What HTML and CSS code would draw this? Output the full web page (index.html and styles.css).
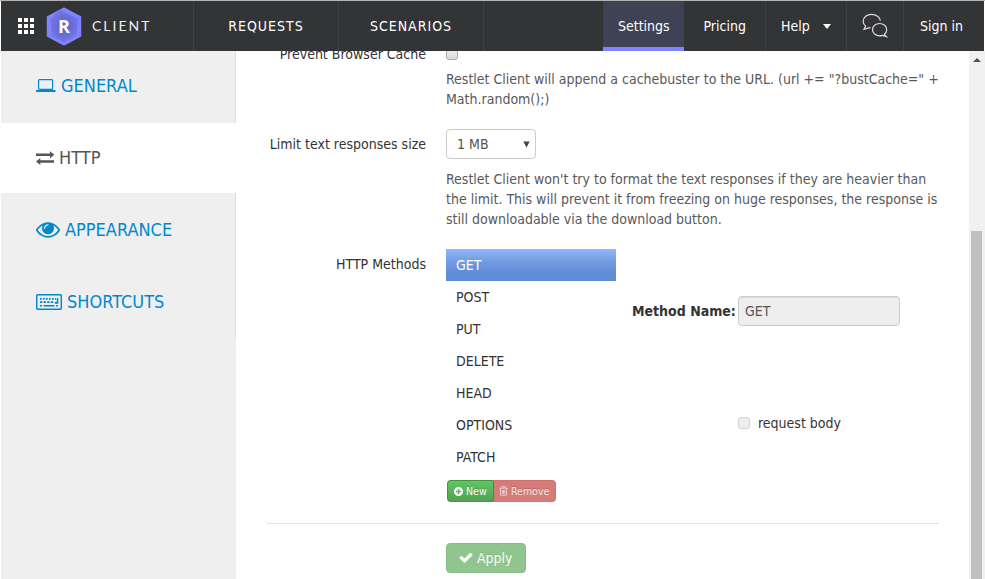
FILE: index.html
```html
<!DOCTYPE html>
<html lang="en">
<head>
<meta charset="utf-8">
<title>Restlet Client - Settings</title>
<link rel="stylesheet" href="styles.css">
</head>
<body>
<header class="topbar">
  <div class="brand">
    <svg class="apps" width="17" height="17" viewBox="0 0 17 17" fill="#fff"><path d="M0 0h4v4H0zM6 0h4v4H6zM12 0h4v4h-4zM0 6h4v4H0zM6 6h4v4H6zM12 6h4v4h-4zM0 12h4v4H0zM6 12h4v4H6zM12 12h4v4h-4z"/></svg>
    <div class="logo">
      <svg width="36" height="39" viewBox="0 0 36 39">
        <defs><radialGradient id="facet"><stop offset="0" stop-color="#5f63c4"/><stop offset=".55" stop-color="#686cd8"/><stop offset="1" stop-color="#7478ec"/></radialGradient></defs>
        <path d="M18 1.200 34.500 10v19L18 37.800 1.500 29V10z" fill="#8085ff" stroke="#8085ff" stroke-width="1.500" stroke-linejoin="round"/><path d="M14 3 32.500 11.500 30.500 28.500 18.500 35.500 6 29.500 4 12z" fill="url(#facet)"/></svg>
      <span>R</span>
    </div>
    <span class="brand-name">CLIENT</span>
  </div>
  <nav class="main-nav"><a>REQUESTS</a><a>SCENARIOS</a></nav>
  <nav class="side-nav">
    <a class="settings">Settings</a><a class="pricing">Pricing</a><a class="help">Help<i class="caret"></i></a>
    <a class="chat"><svg width="26" height="26" viewBox="0 0 26 26" fill="none" stroke="#dcdcdc" stroke-width="1.200"><path d="M8.500 14.600 6 15.200l-4 1.200 1.600-3.300C1.900 11.800 1.200 10.300 1.200 8.200 1.200 4.400 5 1.300 9.600 1.300S18 4.200 18.300 7.700"/><path d="M22.300 21.400c1.500-1.200 2.400-2.900 2.400-4.700 0-3.400-3.200-6.200-7.100-6.200s-7.100 2.800-7.100 6.200 3.200 6.200 7.100 6.200c1 0 2-.2 2.900-.5l3.900 1.200z"/></svg></a>
    <a class="signin">Sign in</a>
  </nav>
</header>
<div class="shell">
  <aside class="sidebar">
    <a><svg class="laptop" width="20" height="16" viewBox="0 0 20 16" fill="none" stroke="#08c" stroke-width="1.200"><rect x="2.600" y="1.600" width="14" height="9.800" rx="1"/><path d="M0 13h19.500" stroke-width="2"/></svg>GENERAL</a>
    <a class="active"><svg width="19" height="16" viewBox="0 0 19 16" fill="#555"><path d="M0 3.500h14V1.200l4.300 3.500L14 8.200V6H0zM18 10.200H4.300V8L0 11.500 4.300 15v-2.300H18z"/></svg>HTTP</a>
    <a><svg class="eye" width="24" height="16" viewBox="0 362 1792 1195" fill="#08c"><path d="M1664 960q-152-236-381-353 61 104 61 225 0 185-131.5 316.5t-316.5 131.5-316.5-131.5-131.5-316.5q0-121 61-225-229 117-381 353 133 205 333.5 326.5t434.5 121.5 434.5-121.5 333.5-326.5zm-720-384q0-20-14-34t-34-14q-125 0-214.5 89.5t-89.5 214.5q0 20 14 34t34 14 34-14 14-34q0-86 61-147t147-61q20 0 34-14t14-34zm848 384q0 34-20 69-140 230-376.5 368.5t-499.5 138.5-499.5-139-376.5-368q-20-35-20-69t20-69q140-229 376.5-368t499.5-139 499.5 139 376.5 368q20 35 20 69z"/></svg>APPEARANCE</a>
    <a><svg class="keys" width="26" height="16" viewBox="0 0 26 16" fill="none" stroke="#08c"><rect x=".7" y=".7" width="24.600" height="14.600" rx="1.300" stroke-width="1.500"/><path d="M4 4.800h16" stroke-width="1.700" stroke-dasharray="1.700 1.300"/><path d="M4 8.200h14" stroke-width="1.700" stroke-dasharray="2.400 1.200"/><path d="M21.500 4v4.900h-2.700M4 11.800h2M7.500 11.800h11M20 11.800h2" stroke-width="1.600"/></svg>SHORTCUTS</a>
  </aside>
  <main class="content">
    <div class="row cache"><label>Prevent Browser Cache</label><div class="field"><span class="check"></span><p>Restlet Client will append a cachebuster to the URL. (url += "?bustCache=" + Math.random();)</p></div></div>
    <div class="row limit"><label>Limit text responses size</label><div class="field"><div class="select">1 MB<svg width="7" height="7" viewBox="0 0 7 7"><path d="M.3.500h6.400L3.500 6.500z" fill="#444"/></svg></div><p>Restlet Client won't try to format the text responses if they are heavier than the limit. This will prevent it from freezing on huge responses, the response is still downloadable via the download button.</p></div></div>
    <div class="row methods"><label>HTTP Methods</label>
      <div class="field">
        <div class="editor">
          <ul><li class="selected">GET</li><li>POST</li><li>PUT</li><li>DELETE</li><li>HEAD</li><li>OPTIONS</li><li>PATCH</li></ul>
          <div class="details">
            <div class="name"><b>Method Name:</b><div class="input">GET</div></div>
            <div class="body"><span class="check disabled"></span>request body</div>
          </div>
        </div>
        <div class="group">
          <span class="btn new"><svg width="9" height="9" viewBox="128 128 1536 1536" fill="#fff"><path d="M1344 960v-128q0-26-19-45t-45-19h-256v-256q0-26-19-45t-45-19h-128q-26 0-45 19t-19 45v256h-256q-26 0-45 19t-19 45v128q0 26 19 45t45 19h256v256q0 26 19 45t45 19h128q26 0 45-19t19-45v-256h256q26 0 45-19t19-45zm320-64q0 209-103 385.500t-279.500 279.500-385.500 103-385.500-103-279.500-279.500-103-385.500 103-385.500 279.500-279.500 385.500-103 385.500 103 279.500 279.500 103 385.500z"/></svg>New</span><span class="btn remove"><svg width="9" height="10" viewBox="0 0 9 10" fill="none" stroke="#f6dedd"><path d="M.2 2.200h8.600M1.500 2.200v7h6v-7M3 2V.6h3V2M3.300 4v3.700M4.500 4v3.700M5.700 4v3.700" stroke-width=".8"/></svg>Remove</span>
        </div>
      </div>
    </div>
    <hr>
    <span class="btn apply"><svg width="14" height="14" viewBox="60 110 1672 1672" fill="#fff"><path d="M1671 566q0 40-28 68l-724 724-136 136q-28 28-68 28t-68-28l-136-136-362-362q-28-28-28-68t28-68l136-136q28-28 68-28t68 28l294 295 656-657q28-28 68-28t68 28l136 136q28 28 28 68z"/></svg>Apply</span>
  </main>
  <div class="scrollbar"><i class="up"></i><div class="thumb"></div></div>
</div>
</body>
</html>
```
FILE: styles.css
```css
* { box-sizing: border-box; }
body {
  margin: 0;
  height: 579px;
  padding-left: 1px;
  overflow: hidden;
  border-top: 1px solid #b4b4b4;
  background: #fff;
  color: #333;
  font: 14px/20px "DejaVu Sans Condensed", "DejaVu Sans", sans-serif;
  font-stretch: condensed;
}
.topbar { display: flex; height: 50px; width: 983px; background: #333436; color: #fff; }
.brand { display: flex; align-items: center; width: 192px; padding-left: 17px; }
.logo { position: relative; width: 36px; height: 39px; margin: 0 10px 0 11px; }
.logo svg { display: block; }
.logo span { position: absolute; inset: 0; text-align: center; font: bold 18px/39px "Open Sans", sans-serif; }
.brand-name { color: #eee; font-family: Lato, sans-serif; letter-spacing: 2px; }
.main-nav { display: flex; }
.main-nav a { width: 145px; line-height: 50px; border-left: 1px solid #3e4045; text-align: center; letter-spacing: 1px; }
.main-nav a:last-child { width: 146px; border-right: 1px solid #3e4045; }
.side-nav { display: flex; margin-left: auto; line-height: 50px; }
.side-nav a { border-left: 1px solid #3e4045; padding-left: 15px; }
.side-nav .settings { width: 81px; padding-left: 15px; border-left: 0; background: #3e4254; box-shadow: inset 0 -4px #8085ff; }
.side-nav .pricing { width: 81px; padding-left: 19.500px; border: 0; }
.side-nav .help { width: 81px; }
.side-nav .chat { width: 57px; padding: 12px 0 0 15px; line-height: 0; }
.side-nav .signin { width: 81px; padding-left: 16px; }
.caret { display: inline-block; margin-left: 13px; vertical-align: 2px; border: 4.500px solid transparent; border-width: 5px 4.500px 0; border-top-color: #fff; }

.shell { display: flex; height: 528px; }
.sidebar { width: 235px; background: #efefef; }
.sidebar a { display: flex; align-items: center; height: 72px; padding: 0 0 2px 35px; border-right: 1px solid #ddd; color: #08c; font-size: 18px; }
.sidebar svg { margin-right: 4px; flex: none; }
.sidebar .eye, .sidebar .laptop, .sidebar .keys { margin-right: 5px; }
.sidebar .active { padding-bottom: 0; height: 70px; background: #fff; border-color: #fff; color: #555; }
.sidebar .active + a, .sidebar .active + a + a { height: 73px; padding-bottom: 0; }
.sidebar .active + a + a { padding-bottom: 2px; }
.content { flex: 1; padding-left: 31px; }
.row { display: flex; }
.row label { width: 159px; margin-right: 20px; text-align: right; }
.field { width: 493px; }
.field p { margin: 10px 0 0; color: #595959; }
.cache { margin-top: -7px; height: 85px; clip-path: inset(7px 0 0); }
.cache .check { margin-top: 3px; }
.cache p { margin-top: 9px; }
.check { display: block; width: 12px; height: 13px; border: 1px solid #aaa; border-radius: 3px; background: linear-gradient(#eee, #dcdcdc); }
.limit label, .methods label { padding-top: 5px; }
.select { display: flex; align-items: center; justify-content: space-between; width: 90px; height: 30px; padding: 0 5px 0 10px; border: 1px solid #ccc; border-radius: 4px; color: #555; }
.methods { margin-top: 20px; }
.editor { display: flex; height: 224px; }
ul { width: 170px; margin: 0; padding: 0; list-style: none; }
li { height: 32px; padding-left: 10px; line-height: 32px; }
.selected { color: #fff; background: linear-gradient(#92b7fb 0%, #759ee4 35%, #608bd6 75%, #628bd3); }
.details { padding: 47px 0 0 16px; }
.name { display: flex; align-items: center; }
.name b { width: 106px; }
.input { width: 162px; height: 30px; padding: 0 6px; line-height: 28px; color: #555; background: #eee; border: 1px solid #ccc; border-radius: 4px; box-shadow: inset 0 1px 1px rgba(0,0,0,.075); }
.body { display: flex; align-items: center; margin: 87px 0 0 106px; }
.body .check { height: 12px; margin-right: 8px; }
.check.disabled { border-color: #d4d4d4; background: #eee; }
.group { display: flex; margin: 7px 0 0 1px; }
.btn { display: flex; align-items: center; color: #fff; text-shadow: 0 -1px rgba(0,0,0,.2); }
.group .btn { height: 22px; padding-left: 6px; border: 1px solid #43943f; font-size: 10.5px; }
.group .new { width: 47px; border-radius: 4px 0 0 4px; background: linear-gradient(#62c462, #51a351); border-right-color: #498d42; }
.group .remove { width: 62px; padding-left: 5px; border: 1px solid #cf7474; border-left: 0; border-radius: 0 4px 4px 0; background: #d67c78; color: #f9e8e7; }
.group svg { margin-right: 3px; }
hr { width: 672px; height: 1px; margin: 21px 0 19px; border: 0; background: #e2e2e2; }
.apply { width: 80px; height: 30px; margin-left: 179px; padding-left: 12px; border: 1px solid #85bd85; border-radius: 4px; background: #90c590; color: #f7fff7; text-shadow: 0 -1px rgba(0,0,0,.12); }
.apply svg { margin-right: 4px; }
.scrollbar { width: 16px; padding: 7px 3px 0 2px; background: #f1f1f1; }
.up { display: block; width: 8px; margin: 0 auto 169px; border: 4px solid transparent; border-top: 0; border-bottom: 4px solid #505050; }
.thumb { height: 348px; background: #c1c1c1; }
```
